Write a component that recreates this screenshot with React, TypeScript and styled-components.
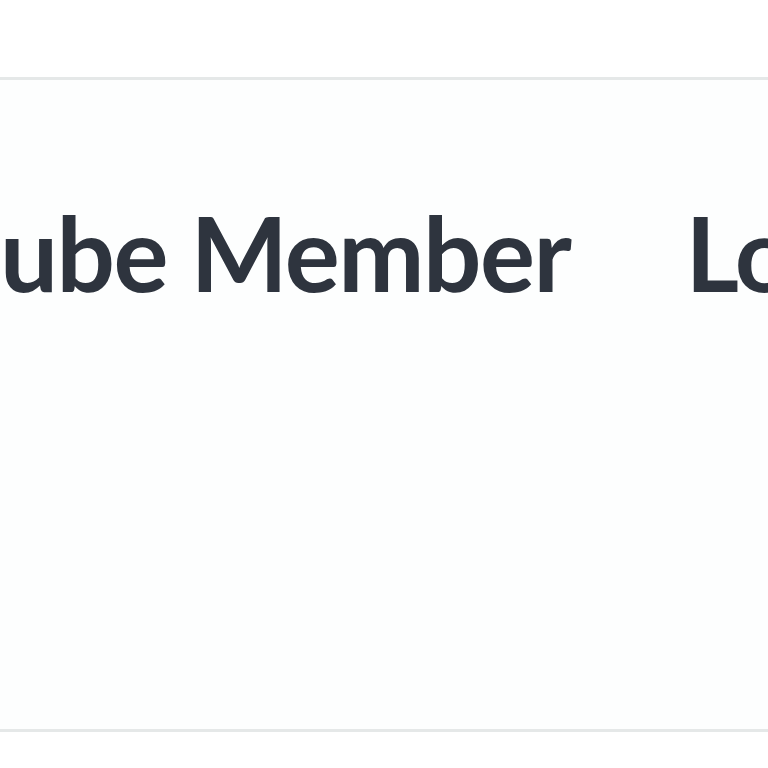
import * as React from 'react';
import styled, { createGlobalStyle } from 'styled-components';

const Global = createGlobalStyle`
  html, body {
    margin: 0;
    padding: 0;
    background: #ffffff;
    overflow: hidden;
  }
`;

const Page = styled.div`
  width: 768px;
  height: 768px;
  overflow: hidden;
  padding-top: 77px;
  box-sizing: border-box;
`;

const Bar = styled.div`
  height: 655px;
  box-sizing: border-box;
  border-top: 3px solid #e5e8e8;
  border-bottom: 3px solid #e5e8e8;
  background: #fdfefe;
  display: flex;
  align-items: flex-start;
  padding-top: 121px;
  overflow: hidden;
`;

const NavLink = styled.a<{ $gap?: number }>`
  font-family: Lato, "Noto Sans", sans-serif;
  font-weight: 700;
  font-size: 103px;
  letter-spacing: -1.5px;
  line-height: 1;
  color: #2e343e;
  white-space: nowrap;
  text-decoration: none;
  margin-right: ${p => p.$gap ?? 0}px;
`;

export default function App() {
  return (
    <>
      <Global />
      <Page>
        <Bar>
          <NavLink $gap={115}>ube Member</NavLink>
          <NavLink>Lo</NavLink>
        </Bar>
      </Page>
    </>
  );
}
